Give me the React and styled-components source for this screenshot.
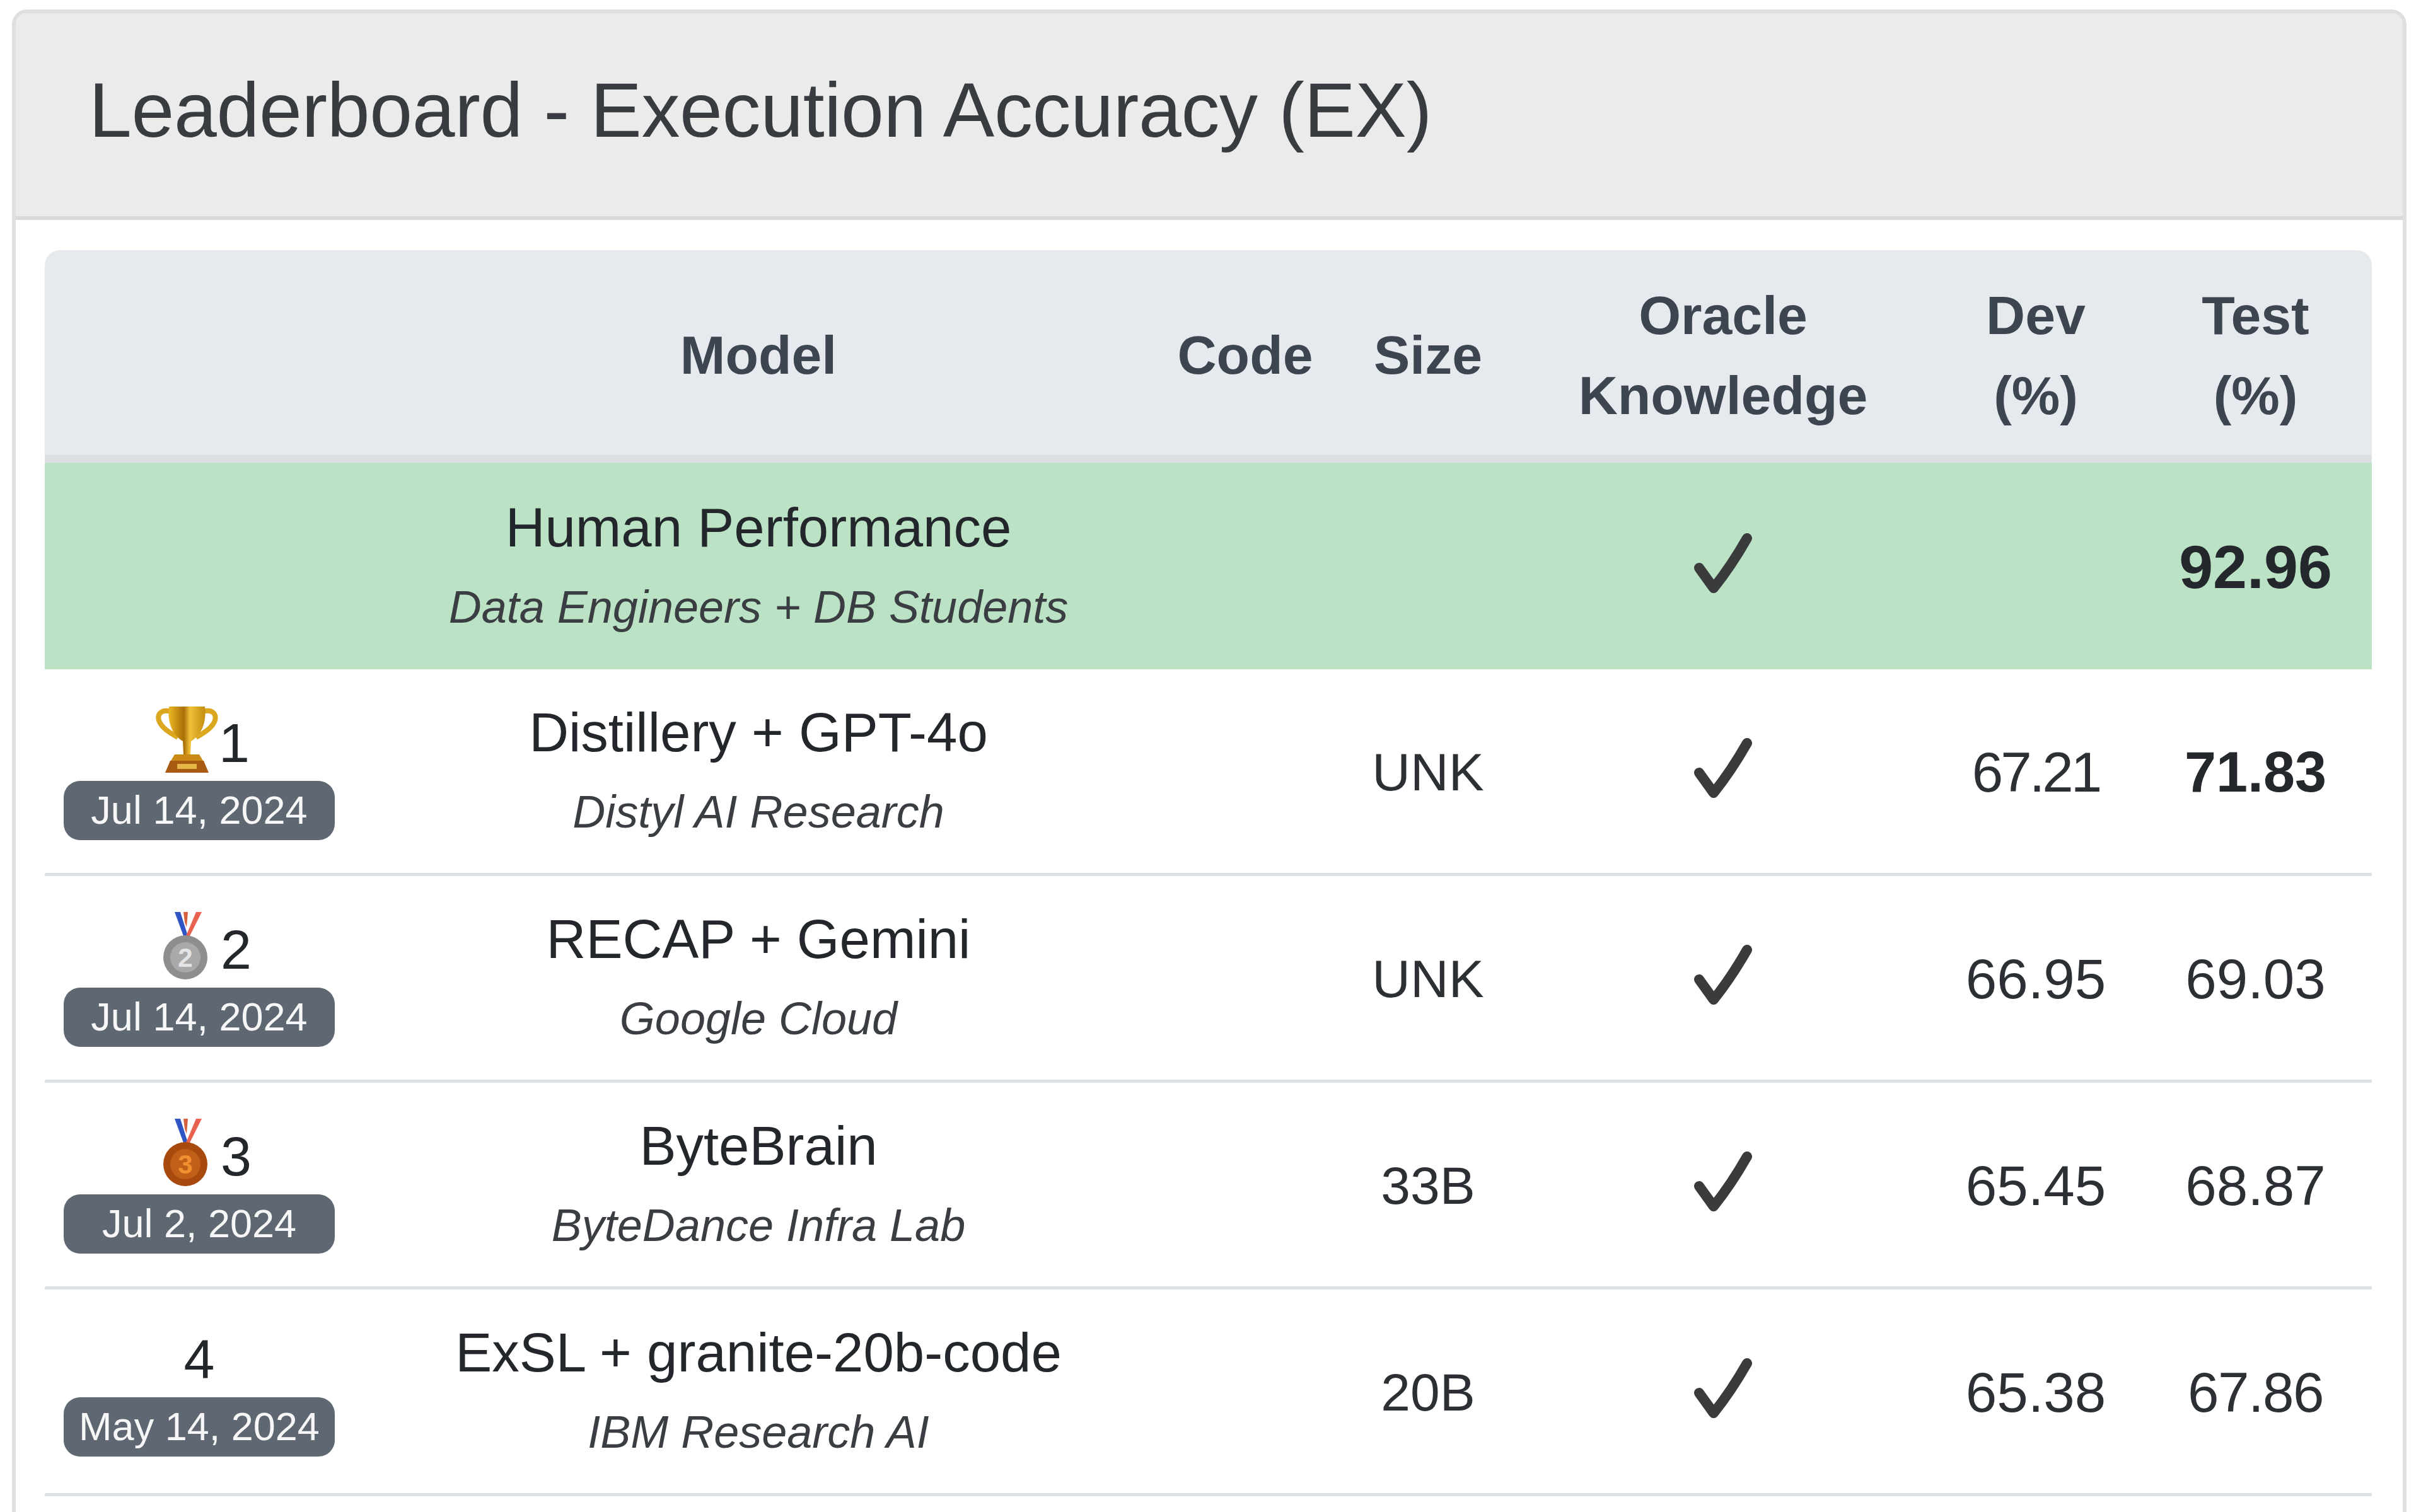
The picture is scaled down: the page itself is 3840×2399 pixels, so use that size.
import React from "react";
import styled, { createGlobalStyle } from "styled-components";

const Global = createGlobalStyle`
  html, body { margin: 0; padding: 0; background: #fff; overflow: hidden; }
  * { box-sizing: border-box; }
  body { font-family: "Liberation Sans", Arial, sans-serif; color: #23272b; }
`;

const Page = styled.div`
  width: 3840px;
  height: 2399px;
  overflow: hidden;
  padding: 15px 23px 0 19px;
  display: flex;
`;

const Card = styled.section`
  flex: 1;
  height: 2500px;
  border: 6px solid #dfdfdf;
  border-radius: 24px 24px 0 0;
  background: #fff;
`;

const CardHeader = styled.header`
  height: 328px;
  background: #ebebeb;
  border-bottom: 6px solid #d9d9d9;
  border-radius: 18px 18px 0 0;
  padding: 0 0 14px 116px;
  display: flex;
  align-items: center;
`;

const Title = styled.h4`
  margin: 0;
  font-size: 122px;
  font-weight: 400;
  color: #383c40;
  white-space: nowrap;
  letter-spacing: -0.35px;
`;

const CardBody = styled.div`
  padding: 48px 46px 0;
`;

const Table = styled.table`
  width: 3691px;
  table-layout: fixed;
  border-collapse: separate;
  border-spacing: 0;
`;

const HeadCell = styled.th`
  height: 337px;
  background: #e6e9ed;
  border-bottom: 12px solid #dcdfe3;
  color: #3d4550;
  font-size: 86px;
  font-weight: 700;
  line-height: 127px;
  padding: 8px 0 0;
  text-align: center;
  &:first-child { border-top-left-radius: 24px; }
  &:last-child { border-top-right-radius: 24px; }
`;

const Row = styled.tr`
  background: ${(p) => (p.$human ? "#bbe2c4" : "#fff")};
`;

const Cell = styled.td`
  height: 328px;
  padding: 3px 0 0;
  text-align: center;
  vertical-align: middle;
  border-bottom: ${(p) => (p.$human ? "none" : "5px solid #dee2e6")};
  color: #2c3034;
`;

const RankCell = styled(Cell)`
  padding-right: 24px;
`;

const SizeValue = styled.span`
  font-size: 84px;
`;

const Score = styled.span`
  font-size: 89px;
  letter-spacing: ${(p) => p.$track || 0}px;
`;

const BoldScore = styled.b`
  font-size: ${(p) => (p.$human ? "97px" : "90px")};
  font-weight: 700;
  color: #24282c;
`;

const ModelName = styled.div`
  font-size: 87px;
  line-height: 127px;
  color: #23272b;
  white-space: nowrap;
`;

const Team = styled.div`
  font-size: 72px;
  line-height: 127px;
  font-style: italic;
  color: #3a3e42;
  white-space: nowrap;
`;

const RankLine = styled.div`
  height: ${(p) => (p.$plain ? "100px" : "112px")};
  display: flex;
  align-items: flex-end;
  justify-content: center;
  font-size: 88px;
  line-height: 100px;
  color: #23272b;
`;

const EmojiSlot = styled.svg`
  display: block;
  flex: none;
  width: 107px;
  height: 110px;
  overflow: visible;
  margin-right: ${(p) => p.$gap}px;
`;

const Badge = styled.div`
  width: 430px;
  height: 94px;
  margin: 10px auto 0;
  border-radius: 26px;
  background: #5f6872;
  color: #f7f7f7;
  font-size: 63px;
  line-height: 92px;
  text-align: center;
  white-space: nowrap;
`;

const CheckIcon = styled.svg`
  display: block;
  width: 100px;
  height: 100px;
  margin: -8px auto 0;
  transform: translateX(3px);
`;

const Trophy = () => (
  <EmojiSlot viewBox="-7 0 107 110" $gap={4}>
    <defs>
      <linearGradient id="cup" x1="0" x2="1" y1="0" y2="0">
        <stop offset="0" stopColor="#eab725" />
        <stop offset="0.42" stopColor="#a96f06" />
        <stop offset="0.58" stopColor="#f0c23a" />
        <stop offset="1" stopColor="#c48c10" />
      </linearGradient>
    </defs>
    <path d="M28 10C14 6 6 13 9 24c4 12 18 20 30 27" fill="none" stroke="#dba71f" strokeWidth="8" />
    <path d="M79 10c14-4 22 3 19 14-4 12-18 20-30 27" fill="none" stroke="#dba71f" strokeWidth="8" />
    <path d="M25 2h57c3 26-6 46-22 55l-1 21H48l-1-21C31 48 22 28 25 2z" fill="url(#cup)" />
    <path d="M34 78h39l6 10H28z" fill="#c98a16" />
    <path d="M27 88h53l8 19H19z" fill="#a85a12" />
    <rect x="38" y="93" width="31" height="8" fill="#e5b548" />
  </EmojiSlot>
);

const Medal = ({ rank, colors }) => (
  <EmojiSlot viewBox="0 0 107 110" $gap={10}>
    <path d="M44 0h9l12 38h-7z" fill="#2f55c4" />
    <path d="M58 0h7l-2 24-3-8z" fill="#d8603c" />
    <path d="M78 0h9L68 38h-6z" fill="#e8624f" />
    <circle cx="61" cy="72" r="35" fill={colors[0]} />
    <circle cx="61" cy="72" r="24" fill={colors[1]} />
    <text x="61" y="87" textAnchor="middle" fontSize="42" fontWeight="700" fontFamily="Liberation Sans, sans-serif" fill={colors[2]}>
      {rank}
    </text>
  </EmojiSlot>
);

const Check = () => (
  <CheckIcon viewBox="0 0 100 100">
    <path d="M9 55 32 87Q60 52 85 8" fill="none" stroke="#3a3b3d" strokeWidth="16" strokeLinecap="round" strokeLinejoin="round" />
  </CheckIcon>
);

const silver = ["#8e8e8e", "#a9a9a9", "#e4e4e4"];
const bronze = ["#a84a0e", "#bf5f18", "#f09030"];

const rows = [
  { rank: 1, date: "Jul 14, 2024", model: "Distillery + GPT-4o", team: "Distyl AI Research", size: "UNK", dev: "67.21", devTrack: -4, test: "71.83", best: true },
  { rank: 2, date: "Jul 14, 2024", model: "RECAP + Gemini", team: "Google Cloud", size: "UNK", dev: "66.95", test: "69.03" },
  { rank: 3, date: "Jul 2, 2024", model: "ByteBrain", team: "ByteDance Infra Lab", size: "33B", dev: "65.45", test: "68.87" },
  { rank: 4, date: "May 14, 2024", model: "ExSL + granite-20b-code", team: "IBM Research AI", size: "20B", dev: "65.38", test: "67.86", testTrack: -1.5 },
];

const RankIcon = ({ rank }) => {
  if (rank === 1) return <Trophy />;
  if (rank === 2) return <Medal rank={2} colors={silver} />;
  if (rank === 3) return <Medal rank={3} colors={bronze} />;
  return null;
};

export default function App() {
  return (
    <>
      <Global />
      <Page>
        <Card>
          <CardHeader>
            <Title>Leaderboard - Execution Accuracy (EX)</Title>
          </CardHeader>
          <CardBody>
            <Table>
              <colgroup>
                <col style={{ width: 514 }} />
                <col style={{ width: 1236 }} />
                <col style={{ width: 308 }} />
                <col style={{ width: 272 }} />
                <col style={{ width: 664 }} />
                <col style={{ width: 328 }} />
                <col style={{ width: 369 }} />
              </colgroup>
              <thead>
                <tr>
                  <HeadCell />
                  <HeadCell>Model</HeadCell>
                  <HeadCell>Code</HeadCell>
                  <HeadCell>Size</HeadCell>
                  <HeadCell>Oracle<br />Knowledge</HeadCell>
                  <HeadCell>Dev<br />(%)</HeadCell>
                  <HeadCell>Test<br />(%)</HeadCell>
                </tr>
              </thead>
              <tbody>
                <Row $human>
                  <Cell $human />
                  <Cell $human>
                    <ModelName>Human Performance</ModelName>
                    <Team>Data Engineers + DB Students</Team>
                  </Cell>
                  <Cell $human />
                  <Cell $human />
                  <Cell $human><Check /></Cell>
                  <Cell $human />
                  <Cell $human><BoldScore $human>92.96</BoldScore></Cell>
                </Row>
                {rows.map((r) => (
                  <Row key={r.rank}>
                    <RankCell>
                      <RankLine $plain={r.rank > 3}>
                        <RankIcon rank={r.rank} />
                        {r.rank}
                      </RankLine>
                      <Badge>{r.date}</Badge>
                    </RankCell>
                    <Cell>
                      <ModelName>{r.model}</ModelName>
                      <Team>{r.team}</Team>
                    </Cell>
                    <Cell />
                    <Cell><SizeValue>{r.size}</SizeValue></Cell>
                    <Cell><Check /></Cell>
                    <Cell><Score $track={r.devTrack}>{r.dev}</Score></Cell>
                    <Cell>
                      {r.best ? <BoldScore>{r.test}</BoldScore> : <Score $track={r.testTrack}>{r.test}</Score>}
                    </Cell>
                  </Row>
                ))}
              </tbody>
            </Table>
          </CardBody>
        </Card>
      </Page>
    </>
  );
}
